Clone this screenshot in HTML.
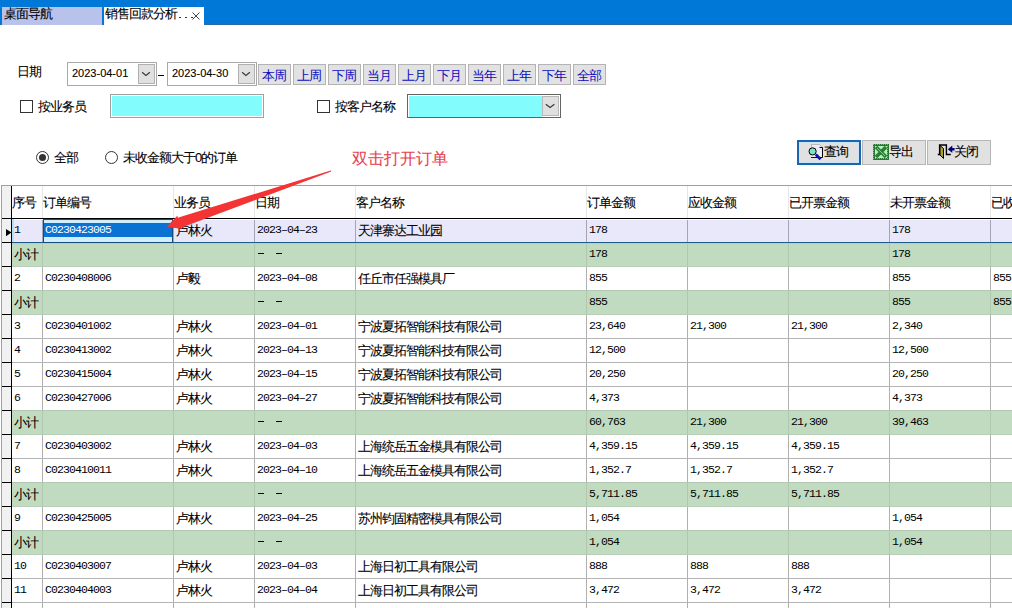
<!DOCTYPE html><html><head><meta charset="utf-8"><style>
*{margin:0;padding:0;box-sizing:border-box}
html,body{width:1012px;height:608px;overflow:hidden;background:#fff}
body{position:relative;font-family:"Liberation Sans",sans-serif;font-size:12px;color:#000}
.a{position:absolute}
.t{position:absolute;white-space:nowrap;line-height:13px;font-size:13px;letter-spacing:-1px;-webkit-text-stroke:0.1px currentColor}
.m{position:absolute;white-space:nowrap;font-family:"Liberation Mono",monospace;font-size:11.5px;letter-spacing:-0.9px;line-height:12px}
.btn{position:absolute;top:64px;width:33px;height:21px;background:#e2e2e2;border:1px solid #b4b4b4;color:#0a0ac0}
.btn span{position:absolute;left:3px;top:4px;line-height:13px;font-size:13px;letter-spacing:-1px;white-space:nowrap}
</style></head><body>
<div class="a" style="left:0;top:0;width:1012px;height:25px;background:#0078d7"></div>
<div class="a" style="left:0;top:24px;width:1012px;height:1px;background:#2a6aa8"></div>
<div class="a" style="left:2px;top:7px;width:100px;height:18px;background:#b8c2ea"></div>
<div class="t" style="left:4px;top:7px">桌面导航</div>
<div class="a" style="left:104px;top:7px;width:100px;height:18px;background:#fff"></div>
<div class="t" style="left:105px;top:7px">销售回款分析</div>
<div class="a" style="left:179px;top:17px;width:2px;height:1px;background:#333"></div>
<div class="a" style="left:185px;top:17px;width:2px;height:1px;background:#333"></div>
<div class="a" style="left:191px;top:17px;width:2px;height:1px;background:#333"></div>
<svg class="a" style="left:191px;top:11px" width="10" height="10"><path d="M1.5 1.5L8.5 8.5M8.5 1.5L1.5 8.5" stroke="#444" stroke-width="1"/></svg>
<div class="t" style="left:17px;top:65px">日期</div>
<div class="a" style="left:67px;top:62px;width:90px;height:24px;border:1px solid #a8a8a8;background:#fff"></div><div class="t" style="left:72px;top:67px;font-size:11px;line-height:12px;letter-spacing:0">2023-04-01</div><div class="a" style="left:138px;top:64px;width:17px;height:20px;background:#e0e0e0;border:1px solid #b0b0b0"></div><svg class="a" style="left:141px;top:70px" width="11" height="8"><path d="M1.1 2.2L4.9 5.5L8.9 2.2" stroke="#3a3a3a" stroke-width="1.2" fill="none"/></svg>
<div class="a" style="left:158px;top:75px;width:6px;height:1px;background:#000"></div>
<div class="a" style="left:167px;top:62px;width:90px;height:24px;border:1px solid #a8a8a8;background:#fff"></div><div class="t" style="left:172px;top:67px;font-size:11px;line-height:12px;letter-spacing:0">2023-04-30</div><div class="a" style="left:238px;top:64px;width:17px;height:20px;background:#e0e0e0;border:1px solid #b0b0b0"></div><svg class="a" style="left:241px;top:70px" width="11" height="8"><path d="M1.1 2.2L4.9 5.5L8.9 2.2" stroke="#3a3a3a" stroke-width="1.2" fill="none"/></svg>
<div class="btn" style="left:258px"><span>本周</span></div>
<div class="btn" style="left:293px"><span>上周</span></div>
<div class="btn" style="left:328px"><span>下周</span></div>
<div class="btn" style="left:363px"><span>当月</span></div>
<div class="btn" style="left:398px"><span>上月</span></div>
<div class="btn" style="left:433px"><span>下月</span></div>
<div class="btn" style="left:468px"><span>当年</span></div>
<div class="btn" style="left:503px"><span>上年</span></div>
<div class="btn" style="left:538px"><span>下年</span></div>
<div class="btn" style="left:573px"><span>全部</span></div>
<div class="a" style="left:20px;top:100px;width:13px;height:13px;border:1px solid #333;background:#fff"></div>
<div class="t" style="left:38px;top:100px">按业务员</div>
<div class="a" style="left:110px;top:94px;width:154px;height:24px;border:1px solid #a0a0a0;background:#82fcfc;box-shadow:inset 0 0 0 1px #fff"></div>
<div class="a" style="left:317px;top:100px;width:13px;height:13px;border:1px solid #333;background:#fff"></div>
<div class="t" style="left:335px;top:100px">按客户名称</div>
<div class="a" style="left:407px;top:94px;width:154px;height:24px;border:1px solid #646464;background:#fff"></div>
<div class="a" style="left:409px;top:96px;width:133px;height:21px;background:#82fcfc"></div>
<div class="a" style="left:542px;top:96px;width:17px;height:20px;background:#e0e0e0;border:1px solid #b8b8b8"></div>
<svg class="a" style="left:545px;top:102px" width="11" height="8"><path d="M0.8 2.2L5.1 5.5L9.4 2.2" stroke="#3a3a3a" stroke-width="1.2" fill="none"/></svg>
<svg class="a" style="left:36px;top:151px" width="13" height="13"><circle cx="6.5" cy="6.5" r="6" fill="#fff" stroke="#333" stroke-width="1"/><circle cx="6.5" cy="6.5" r="3.5" fill="#333"/></svg>
<div class="t" style="left:54px;top:151px">全部</div>
<svg class="a" style="left:105px;top:151px" width="13" height="13"><circle cx="6.5" cy="6.5" r="6" fill="#fff" stroke="#333" stroke-width="1"/></svg>
<div class="t" style="left:123px;top:151px">未收金额大于0的订单</div>
<div class="t" style="left:352px;top:151px;font-size:16px;line-height:16px;letter-spacing:0;color:#e8414f">双击打开订单</div>
<div class="a" style="left:797px;top:140px;width:64px;height:25px;border:2px solid #1a64b0;background:#e1e1e1;box-shadow:inset 0 0 0 1px #c8e4f8"></div>
<div class="t" style="left:824px;top:145px">查询</div>
<div class="a" style="left:862px;top:140px;width:64px;height:25px;border:1px solid #b6b6b6;background:#e1e1e1"></div>
<div class="t" style="left:889px;top:145px">导出</div>
<div class="a" style="left:927px;top:140px;width:64px;height:25px;border:1px solid #b6b6b6;background:#e1e1e1"></div>
<div class="t" style="left:954px;top:145px">关闭</div>
<div class="a" style="left:1px;top:185px;width:1011px;height:1px;background:#a0a0a0"></div>
<div class="a" style="left:1px;top:185px;width:1px;height:423px;background:#a0a0a0"></div>
<div class="a" style="left:2px;top:186px;width:9px;height:422px;background:#f1f1f1"></div>
<div class="a" style="left:11px;top:186px;width:1px;height:422px;background:#000"></div>
<div class="t" style="left:12px;top:196px">序号</div>
<div class="a" style="left:42px;top:186px;width:1px;height:32px;background:#e6e6e6"></div>
<div class="t" style="left:43px;top:196px">订单编号</div>
<div class="a" style="left:173px;top:186px;width:1px;height:32px;background:#e6e6e6"></div>
<div class="t" style="left:174px;top:196px">业务员</div>
<div class="a" style="left:254px;top:186px;width:1px;height:32px;background:#e6e6e6"></div>
<div class="t" style="left:255px;top:196px">日期</div>
<div class="a" style="left:355px;top:186px;width:1px;height:32px;background:#e6e6e6"></div>
<div class="t" style="left:356px;top:196px">客户名称</div>
<div class="a" style="left:586px;top:186px;width:1px;height:32px;background:#e6e6e6"></div>
<div class="t" style="left:587px;top:196px">订单金额</div>
<div class="a" style="left:687px;top:186px;width:1px;height:32px;background:#e6e6e6"></div>
<div class="t" style="left:688px;top:196px">应收金额</div>
<div class="a" style="left:788px;top:186px;width:1px;height:32px;background:#e6e6e6"></div>
<div class="t" style="left:789px;top:196px">已开票金额</div>
<div class="a" style="left:889px;top:186px;width:1px;height:32px;background:#e6e6e6"></div>
<div class="t" style="left:890px;top:196px">未开票金额</div>
<div class="a" style="left:990px;top:186px;width:1px;height:32px;background:#e6e6e6"></div>
<div class="t" style="left:991px;top:196px">已收款金额</div>
<div class="a" style="left:2px;top:218px;width:1010px;height:1px;background:#000"></div>
<div class="a" style="left:12px;top:219px;width:1000px;height:23px;background:#e8e8fa"></div>
<div class="a" style="left:12px;top:242px;width:1000px;height:1px;background:#b4b4b4"></div>
<div class="a" style="left:2px;top:242px;width:9px;height:1px;background:#000"></div>
<div class="m" style="left:14px;top:224px">1</div>
<div class="a" style="left:42px;top:219px;width:1px;height:23px;background:#a4a4b4"></div>
<div class="m" style="left:45px;top:224px">C0230423005</div>
<div class="a" style="left:173px;top:219px;width:1px;height:23px;background:#a4a4b4"></div>
<div class="t" style="left:176px;top:224px">卢林火</div>
<div class="a" style="left:254px;top:219px;width:1px;height:23px;background:#a4a4b4"></div>
<div class="m" style="left:257px;top:224px">2023&#8211;04&#8211;23</div>
<div class="a" style="left:355px;top:219px;width:1px;height:23px;background:#a4a4b4"></div>
<div class="t" style="left:358px;top:224px">天津寨达工业园</div>
<div class="a" style="left:586px;top:219px;width:1px;height:23px;background:#a4a4b4"></div>
<div class="m" style="left:589px;top:224px">178</div>
<div class="a" style="left:687px;top:219px;width:1px;height:23px;background:#a4a4b4"></div>
<div class="a" style="left:788px;top:219px;width:1px;height:23px;background:#a4a4b4"></div>
<div class="a" style="left:889px;top:219px;width:1px;height:23px;background:#a4a4b4"></div>
<div class="m" style="left:892px;top:224px">178</div>
<div class="a" style="left:990px;top:219px;width:1px;height:23px;background:#a4a4b4"></div>
<div class="a" style="left:12px;top:243px;width:1000px;height:23px;background:#c1dbc1"></div>
<div class="a" style="left:12px;top:266px;width:1000px;height:1px;background:#b6cdb6"></div>
<div class="a" style="left:2px;top:266px;width:9px;height:1px;background:#000"></div>
<div class="t" style="left:14px;top:248px">小计</div>
<div class="a" style="left:42px;top:243px;width:1px;height:23px;background:#b0c8b0"></div>
<div class="a" style="left:173px;top:243px;width:1px;height:23px;background:#b0c8b0"></div>
<div class="a" style="left:254px;top:243px;width:1px;height:23px;background:#b0c8b0"></div>
<div class="a" style="left:258px;top:253px;width:6px;height:1px;background:#000"></div>
<div class="a" style="left:276px;top:253px;width:6px;height:1px;background:#000"></div>
<div class="a" style="left:355px;top:243px;width:1px;height:23px;background:#b0c8b0"></div>
<div class="a" style="left:586px;top:243px;width:1px;height:23px;background:#b0c8b0"></div>
<div class="m" style="left:589px;top:248px">178</div>
<div class="a" style="left:687px;top:243px;width:1px;height:23px;background:#b0c8b0"></div>
<div class="a" style="left:788px;top:243px;width:1px;height:23px;background:#b0c8b0"></div>
<div class="a" style="left:889px;top:243px;width:1px;height:23px;background:#b0c8b0"></div>
<div class="m" style="left:892px;top:248px">178</div>
<div class="a" style="left:990px;top:243px;width:1px;height:23px;background:#b0c8b0"></div>
<div class="a" style="left:12px;top:267px;width:1000px;height:23px;background:#fff"></div>
<div class="a" style="left:12px;top:290px;width:1000px;height:1px;background:#b4b4b4"></div>
<div class="a" style="left:2px;top:290px;width:9px;height:1px;background:#000"></div>
<div class="m" style="left:14px;top:272px">2</div>
<div class="a" style="left:42px;top:267px;width:1px;height:23px;background:#b0b0b0"></div>
<div class="m" style="left:45px;top:272px">C0230408006</div>
<div class="a" style="left:173px;top:267px;width:1px;height:23px;background:#b0b0b0"></div>
<div class="t" style="left:176px;top:272px">卢毅</div>
<div class="a" style="left:254px;top:267px;width:1px;height:23px;background:#b0b0b0"></div>
<div class="m" style="left:257px;top:272px">2023&#8211;04&#8211;08</div>
<div class="a" style="left:355px;top:267px;width:1px;height:23px;background:#b0b0b0"></div>
<div class="t" style="left:358px;top:272px">任丘市任强模具厂</div>
<div class="a" style="left:586px;top:267px;width:1px;height:23px;background:#b0b0b0"></div>
<div class="m" style="left:589px;top:272px">855</div>
<div class="a" style="left:687px;top:267px;width:1px;height:23px;background:#b0b0b0"></div>
<div class="a" style="left:788px;top:267px;width:1px;height:23px;background:#b0b0b0"></div>
<div class="a" style="left:889px;top:267px;width:1px;height:23px;background:#b0b0b0"></div>
<div class="m" style="left:892px;top:272px">855</div>
<div class="a" style="left:990px;top:267px;width:1px;height:23px;background:#b0b0b0"></div>
<div class="m" style="left:993px;top:272px">855</div>
<div class="a" style="left:12px;top:291px;width:1000px;height:23px;background:#c1dbc1"></div>
<div class="a" style="left:12px;top:290px;width:1000px;height:1px;background:#b2c8b2"></div>
<div class="a" style="left:12px;top:314px;width:1000px;height:1px;background:#b6cdb6"></div>
<div class="a" style="left:2px;top:314px;width:9px;height:1px;background:#000"></div>
<div class="t" style="left:14px;top:296px">小计</div>
<div class="a" style="left:42px;top:291px;width:1px;height:23px;background:#b0c8b0"></div>
<div class="a" style="left:173px;top:291px;width:1px;height:23px;background:#b0c8b0"></div>
<div class="a" style="left:254px;top:291px;width:1px;height:23px;background:#b0c8b0"></div>
<div class="a" style="left:258px;top:301px;width:6px;height:1px;background:#000"></div>
<div class="a" style="left:276px;top:301px;width:6px;height:1px;background:#000"></div>
<div class="a" style="left:355px;top:291px;width:1px;height:23px;background:#b0c8b0"></div>
<div class="a" style="left:586px;top:291px;width:1px;height:23px;background:#b0c8b0"></div>
<div class="m" style="left:589px;top:296px">855</div>
<div class="a" style="left:687px;top:291px;width:1px;height:23px;background:#b0c8b0"></div>
<div class="a" style="left:788px;top:291px;width:1px;height:23px;background:#b0c8b0"></div>
<div class="a" style="left:889px;top:291px;width:1px;height:23px;background:#b0c8b0"></div>
<div class="m" style="left:892px;top:296px">855</div>
<div class="a" style="left:990px;top:291px;width:1px;height:23px;background:#b0c8b0"></div>
<div class="m" style="left:993px;top:296px">855</div>
<div class="a" style="left:12px;top:315px;width:1000px;height:23px;background:#fff"></div>
<div class="a" style="left:12px;top:338px;width:1000px;height:1px;background:#b4b4b4"></div>
<div class="a" style="left:2px;top:338px;width:9px;height:1px;background:#000"></div>
<div class="m" style="left:14px;top:320px">3</div>
<div class="a" style="left:42px;top:315px;width:1px;height:23px;background:#b0b0b0"></div>
<div class="m" style="left:45px;top:320px">C0230401002</div>
<div class="a" style="left:173px;top:315px;width:1px;height:23px;background:#b0b0b0"></div>
<div class="t" style="left:176px;top:320px">卢林火</div>
<div class="a" style="left:254px;top:315px;width:1px;height:23px;background:#b0b0b0"></div>
<div class="m" style="left:257px;top:320px">2023&#8211;04&#8211;01</div>
<div class="a" style="left:355px;top:315px;width:1px;height:23px;background:#b0b0b0"></div>
<div class="t" style="left:358px;top:320px">宁波夏拓智能科技有限公司</div>
<div class="a" style="left:586px;top:315px;width:1px;height:23px;background:#b0b0b0"></div>
<div class="m" style="left:589px;top:320px">23,640</div>
<div class="a" style="left:687px;top:315px;width:1px;height:23px;background:#b0b0b0"></div>
<div class="m" style="left:690px;top:320px">21,300</div>
<div class="a" style="left:788px;top:315px;width:1px;height:23px;background:#b0b0b0"></div>
<div class="m" style="left:791px;top:320px">21,300</div>
<div class="a" style="left:889px;top:315px;width:1px;height:23px;background:#b0b0b0"></div>
<div class="m" style="left:892px;top:320px">2,340</div>
<div class="a" style="left:990px;top:315px;width:1px;height:23px;background:#b0b0b0"></div>
<div class="a" style="left:12px;top:339px;width:1000px;height:23px;background:#fff"></div>
<div class="a" style="left:12px;top:362px;width:1000px;height:1px;background:#b4b4b4"></div>
<div class="a" style="left:2px;top:362px;width:9px;height:1px;background:#000"></div>
<div class="m" style="left:14px;top:344px">4</div>
<div class="a" style="left:42px;top:339px;width:1px;height:23px;background:#b0b0b0"></div>
<div class="m" style="left:45px;top:344px">C0230413002</div>
<div class="a" style="left:173px;top:339px;width:1px;height:23px;background:#b0b0b0"></div>
<div class="t" style="left:176px;top:344px">卢林火</div>
<div class="a" style="left:254px;top:339px;width:1px;height:23px;background:#b0b0b0"></div>
<div class="m" style="left:257px;top:344px">2023&#8211;04&#8211;13</div>
<div class="a" style="left:355px;top:339px;width:1px;height:23px;background:#b0b0b0"></div>
<div class="t" style="left:358px;top:344px">宁波夏拓智能科技有限公司</div>
<div class="a" style="left:586px;top:339px;width:1px;height:23px;background:#b0b0b0"></div>
<div class="m" style="left:589px;top:344px">12,500</div>
<div class="a" style="left:687px;top:339px;width:1px;height:23px;background:#b0b0b0"></div>
<div class="a" style="left:788px;top:339px;width:1px;height:23px;background:#b0b0b0"></div>
<div class="a" style="left:889px;top:339px;width:1px;height:23px;background:#b0b0b0"></div>
<div class="m" style="left:892px;top:344px">12,500</div>
<div class="a" style="left:990px;top:339px;width:1px;height:23px;background:#b0b0b0"></div>
<div class="a" style="left:12px;top:363px;width:1000px;height:23px;background:#fff"></div>
<div class="a" style="left:12px;top:386px;width:1000px;height:1px;background:#b4b4b4"></div>
<div class="a" style="left:2px;top:386px;width:9px;height:1px;background:#000"></div>
<div class="m" style="left:14px;top:368px">5</div>
<div class="a" style="left:42px;top:363px;width:1px;height:23px;background:#b0b0b0"></div>
<div class="m" style="left:45px;top:368px">C0230415004</div>
<div class="a" style="left:173px;top:363px;width:1px;height:23px;background:#b0b0b0"></div>
<div class="t" style="left:176px;top:368px">卢林火</div>
<div class="a" style="left:254px;top:363px;width:1px;height:23px;background:#b0b0b0"></div>
<div class="m" style="left:257px;top:368px">2023&#8211;04&#8211;15</div>
<div class="a" style="left:355px;top:363px;width:1px;height:23px;background:#b0b0b0"></div>
<div class="t" style="left:358px;top:368px">宁波夏拓智能科技有限公司</div>
<div class="a" style="left:586px;top:363px;width:1px;height:23px;background:#b0b0b0"></div>
<div class="m" style="left:589px;top:368px">20,250</div>
<div class="a" style="left:687px;top:363px;width:1px;height:23px;background:#b0b0b0"></div>
<div class="a" style="left:788px;top:363px;width:1px;height:23px;background:#b0b0b0"></div>
<div class="a" style="left:889px;top:363px;width:1px;height:23px;background:#b0b0b0"></div>
<div class="m" style="left:892px;top:368px">20,250</div>
<div class="a" style="left:990px;top:363px;width:1px;height:23px;background:#b0b0b0"></div>
<div class="a" style="left:12px;top:387px;width:1000px;height:23px;background:#fff"></div>
<div class="a" style="left:12px;top:410px;width:1000px;height:1px;background:#b4b4b4"></div>
<div class="a" style="left:2px;top:410px;width:9px;height:1px;background:#000"></div>
<div class="m" style="left:14px;top:392px">6</div>
<div class="a" style="left:42px;top:387px;width:1px;height:23px;background:#b0b0b0"></div>
<div class="m" style="left:45px;top:392px">C0230427006</div>
<div class="a" style="left:173px;top:387px;width:1px;height:23px;background:#b0b0b0"></div>
<div class="t" style="left:176px;top:392px">卢林火</div>
<div class="a" style="left:254px;top:387px;width:1px;height:23px;background:#b0b0b0"></div>
<div class="m" style="left:257px;top:392px">2023&#8211;04&#8211;27</div>
<div class="a" style="left:355px;top:387px;width:1px;height:23px;background:#b0b0b0"></div>
<div class="t" style="left:358px;top:392px">宁波夏拓智能科技有限公司</div>
<div class="a" style="left:586px;top:387px;width:1px;height:23px;background:#b0b0b0"></div>
<div class="m" style="left:589px;top:392px">4,373</div>
<div class="a" style="left:687px;top:387px;width:1px;height:23px;background:#b0b0b0"></div>
<div class="a" style="left:788px;top:387px;width:1px;height:23px;background:#b0b0b0"></div>
<div class="a" style="left:889px;top:387px;width:1px;height:23px;background:#b0b0b0"></div>
<div class="m" style="left:892px;top:392px">4,373</div>
<div class="a" style="left:990px;top:387px;width:1px;height:23px;background:#b0b0b0"></div>
<div class="a" style="left:12px;top:411px;width:1000px;height:23px;background:#c1dbc1"></div>
<div class="a" style="left:12px;top:410px;width:1000px;height:1px;background:#b2c8b2"></div>
<div class="a" style="left:12px;top:434px;width:1000px;height:1px;background:#b6cdb6"></div>
<div class="a" style="left:2px;top:434px;width:9px;height:1px;background:#000"></div>
<div class="t" style="left:14px;top:416px">小计</div>
<div class="a" style="left:42px;top:411px;width:1px;height:23px;background:#b0c8b0"></div>
<div class="a" style="left:173px;top:411px;width:1px;height:23px;background:#b0c8b0"></div>
<div class="a" style="left:254px;top:411px;width:1px;height:23px;background:#b0c8b0"></div>
<div class="a" style="left:258px;top:421px;width:6px;height:1px;background:#000"></div>
<div class="a" style="left:276px;top:421px;width:6px;height:1px;background:#000"></div>
<div class="a" style="left:355px;top:411px;width:1px;height:23px;background:#b0c8b0"></div>
<div class="a" style="left:586px;top:411px;width:1px;height:23px;background:#b0c8b0"></div>
<div class="m" style="left:589px;top:416px">60,763</div>
<div class="a" style="left:687px;top:411px;width:1px;height:23px;background:#b0c8b0"></div>
<div class="m" style="left:690px;top:416px">21,300</div>
<div class="a" style="left:788px;top:411px;width:1px;height:23px;background:#b0c8b0"></div>
<div class="m" style="left:791px;top:416px">21,300</div>
<div class="a" style="left:889px;top:411px;width:1px;height:23px;background:#b0c8b0"></div>
<div class="m" style="left:892px;top:416px">39,463</div>
<div class="a" style="left:990px;top:411px;width:1px;height:23px;background:#b0c8b0"></div>
<div class="a" style="left:12px;top:435px;width:1000px;height:23px;background:#fff"></div>
<div class="a" style="left:12px;top:458px;width:1000px;height:1px;background:#b4b4b4"></div>
<div class="a" style="left:2px;top:458px;width:9px;height:1px;background:#000"></div>
<div class="m" style="left:14px;top:440px">7</div>
<div class="a" style="left:42px;top:435px;width:1px;height:23px;background:#b0b0b0"></div>
<div class="m" style="left:45px;top:440px">C0230403002</div>
<div class="a" style="left:173px;top:435px;width:1px;height:23px;background:#b0b0b0"></div>
<div class="t" style="left:176px;top:440px">卢林火</div>
<div class="a" style="left:254px;top:435px;width:1px;height:23px;background:#b0b0b0"></div>
<div class="m" style="left:257px;top:440px">2023&#8211;04&#8211;03</div>
<div class="a" style="left:355px;top:435px;width:1px;height:23px;background:#b0b0b0"></div>
<div class="t" style="left:358px;top:440px">上海统岳五金模具有限公司</div>
<div class="a" style="left:586px;top:435px;width:1px;height:23px;background:#b0b0b0"></div>
<div class="m" style="left:589px;top:440px">4,359.15</div>
<div class="a" style="left:687px;top:435px;width:1px;height:23px;background:#b0b0b0"></div>
<div class="m" style="left:690px;top:440px">4,359.15</div>
<div class="a" style="left:788px;top:435px;width:1px;height:23px;background:#b0b0b0"></div>
<div class="m" style="left:791px;top:440px">4,359.15</div>
<div class="a" style="left:889px;top:435px;width:1px;height:23px;background:#b0b0b0"></div>
<div class="a" style="left:990px;top:435px;width:1px;height:23px;background:#b0b0b0"></div>
<div class="a" style="left:12px;top:459px;width:1000px;height:23px;background:#fff"></div>
<div class="a" style="left:12px;top:482px;width:1000px;height:1px;background:#b4b4b4"></div>
<div class="a" style="left:2px;top:482px;width:9px;height:1px;background:#000"></div>
<div class="m" style="left:14px;top:464px">8</div>
<div class="a" style="left:42px;top:459px;width:1px;height:23px;background:#b0b0b0"></div>
<div class="m" style="left:45px;top:464px">C0230410011</div>
<div class="a" style="left:173px;top:459px;width:1px;height:23px;background:#b0b0b0"></div>
<div class="t" style="left:176px;top:464px">卢林火</div>
<div class="a" style="left:254px;top:459px;width:1px;height:23px;background:#b0b0b0"></div>
<div class="m" style="left:257px;top:464px">2023&#8211;04&#8211;10</div>
<div class="a" style="left:355px;top:459px;width:1px;height:23px;background:#b0b0b0"></div>
<div class="t" style="left:358px;top:464px">上海统岳五金模具有限公司</div>
<div class="a" style="left:586px;top:459px;width:1px;height:23px;background:#b0b0b0"></div>
<div class="m" style="left:589px;top:464px">1,352.7</div>
<div class="a" style="left:687px;top:459px;width:1px;height:23px;background:#b0b0b0"></div>
<div class="m" style="left:690px;top:464px">1,352.7</div>
<div class="a" style="left:788px;top:459px;width:1px;height:23px;background:#b0b0b0"></div>
<div class="m" style="left:791px;top:464px">1,352.7</div>
<div class="a" style="left:889px;top:459px;width:1px;height:23px;background:#b0b0b0"></div>
<div class="a" style="left:990px;top:459px;width:1px;height:23px;background:#b0b0b0"></div>
<div class="a" style="left:12px;top:483px;width:1000px;height:23px;background:#c1dbc1"></div>
<div class="a" style="left:12px;top:482px;width:1000px;height:1px;background:#b2c8b2"></div>
<div class="a" style="left:12px;top:506px;width:1000px;height:1px;background:#b6cdb6"></div>
<div class="a" style="left:2px;top:506px;width:9px;height:1px;background:#000"></div>
<div class="t" style="left:14px;top:488px">小计</div>
<div class="a" style="left:42px;top:483px;width:1px;height:23px;background:#b0c8b0"></div>
<div class="a" style="left:173px;top:483px;width:1px;height:23px;background:#b0c8b0"></div>
<div class="a" style="left:254px;top:483px;width:1px;height:23px;background:#b0c8b0"></div>
<div class="a" style="left:258px;top:493px;width:6px;height:1px;background:#000"></div>
<div class="a" style="left:276px;top:493px;width:6px;height:1px;background:#000"></div>
<div class="a" style="left:355px;top:483px;width:1px;height:23px;background:#b0c8b0"></div>
<div class="a" style="left:586px;top:483px;width:1px;height:23px;background:#b0c8b0"></div>
<div class="m" style="left:589px;top:488px">5,711.85</div>
<div class="a" style="left:687px;top:483px;width:1px;height:23px;background:#b0c8b0"></div>
<div class="m" style="left:690px;top:488px">5,711.85</div>
<div class="a" style="left:788px;top:483px;width:1px;height:23px;background:#b0c8b0"></div>
<div class="m" style="left:791px;top:488px">5,711.85</div>
<div class="a" style="left:889px;top:483px;width:1px;height:23px;background:#b0c8b0"></div>
<div class="a" style="left:990px;top:483px;width:1px;height:23px;background:#b0c8b0"></div>
<div class="a" style="left:12px;top:507px;width:1000px;height:23px;background:#fff"></div>
<div class="a" style="left:12px;top:530px;width:1000px;height:1px;background:#b4b4b4"></div>
<div class="a" style="left:2px;top:530px;width:9px;height:1px;background:#000"></div>
<div class="m" style="left:14px;top:512px">9</div>
<div class="a" style="left:42px;top:507px;width:1px;height:23px;background:#b0b0b0"></div>
<div class="m" style="left:45px;top:512px">C0230425005</div>
<div class="a" style="left:173px;top:507px;width:1px;height:23px;background:#b0b0b0"></div>
<div class="t" style="left:176px;top:512px">卢林火</div>
<div class="a" style="left:254px;top:507px;width:1px;height:23px;background:#b0b0b0"></div>
<div class="m" style="left:257px;top:512px">2023&#8211;04&#8211;25</div>
<div class="a" style="left:355px;top:507px;width:1px;height:23px;background:#b0b0b0"></div>
<div class="t" style="left:358px;top:512px">苏州钧固精密模具有限公司</div>
<div class="a" style="left:586px;top:507px;width:1px;height:23px;background:#b0b0b0"></div>
<div class="m" style="left:589px;top:512px">1,054</div>
<div class="a" style="left:687px;top:507px;width:1px;height:23px;background:#b0b0b0"></div>
<div class="a" style="left:788px;top:507px;width:1px;height:23px;background:#b0b0b0"></div>
<div class="a" style="left:889px;top:507px;width:1px;height:23px;background:#b0b0b0"></div>
<div class="m" style="left:892px;top:512px">1,054</div>
<div class="a" style="left:990px;top:507px;width:1px;height:23px;background:#b0b0b0"></div>
<div class="a" style="left:12px;top:531px;width:1000px;height:23px;background:#c1dbc1"></div>
<div class="a" style="left:12px;top:530px;width:1000px;height:1px;background:#b2c8b2"></div>
<div class="a" style="left:12px;top:554px;width:1000px;height:1px;background:#b6cdb6"></div>
<div class="a" style="left:2px;top:554px;width:9px;height:1px;background:#000"></div>
<div class="t" style="left:14px;top:536px">小计</div>
<div class="a" style="left:42px;top:531px;width:1px;height:23px;background:#b0c8b0"></div>
<div class="a" style="left:173px;top:531px;width:1px;height:23px;background:#b0c8b0"></div>
<div class="a" style="left:254px;top:531px;width:1px;height:23px;background:#b0c8b0"></div>
<div class="a" style="left:258px;top:541px;width:6px;height:1px;background:#000"></div>
<div class="a" style="left:276px;top:541px;width:6px;height:1px;background:#000"></div>
<div class="a" style="left:355px;top:531px;width:1px;height:23px;background:#b0c8b0"></div>
<div class="a" style="left:586px;top:531px;width:1px;height:23px;background:#b0c8b0"></div>
<div class="m" style="left:589px;top:536px">1,054</div>
<div class="a" style="left:687px;top:531px;width:1px;height:23px;background:#b0c8b0"></div>
<div class="a" style="left:788px;top:531px;width:1px;height:23px;background:#b0c8b0"></div>
<div class="a" style="left:889px;top:531px;width:1px;height:23px;background:#b0c8b0"></div>
<div class="m" style="left:892px;top:536px">1,054</div>
<div class="a" style="left:990px;top:531px;width:1px;height:23px;background:#b0c8b0"></div>
<div class="a" style="left:12px;top:555px;width:1000px;height:23px;background:#fff"></div>
<div class="a" style="left:12px;top:578px;width:1000px;height:1px;background:#b4b4b4"></div>
<div class="a" style="left:2px;top:578px;width:9px;height:1px;background:#000"></div>
<div class="m" style="left:14px;top:560px">10</div>
<div class="a" style="left:42px;top:555px;width:1px;height:23px;background:#b0b0b0"></div>
<div class="m" style="left:45px;top:560px">C0230403007</div>
<div class="a" style="left:173px;top:555px;width:1px;height:23px;background:#b0b0b0"></div>
<div class="t" style="left:176px;top:560px">卢林火</div>
<div class="a" style="left:254px;top:555px;width:1px;height:23px;background:#b0b0b0"></div>
<div class="m" style="left:257px;top:560px">2023&#8211;04&#8211;03</div>
<div class="a" style="left:355px;top:555px;width:1px;height:23px;background:#b0b0b0"></div>
<div class="t" style="left:358px;top:560px">上海日初工具有限公司</div>
<div class="a" style="left:586px;top:555px;width:1px;height:23px;background:#b0b0b0"></div>
<div class="m" style="left:589px;top:560px">888</div>
<div class="a" style="left:687px;top:555px;width:1px;height:23px;background:#b0b0b0"></div>
<div class="m" style="left:690px;top:560px">888</div>
<div class="a" style="left:788px;top:555px;width:1px;height:23px;background:#b0b0b0"></div>
<div class="m" style="left:791px;top:560px">888</div>
<div class="a" style="left:889px;top:555px;width:1px;height:23px;background:#b0b0b0"></div>
<div class="a" style="left:990px;top:555px;width:1px;height:23px;background:#b0b0b0"></div>
<div class="a" style="left:12px;top:579px;width:1000px;height:23px;background:#fff"></div>
<div class="a" style="left:12px;top:602px;width:1000px;height:1px;background:#b4b4b4"></div>
<div class="a" style="left:2px;top:602px;width:9px;height:1px;background:#000"></div>
<div class="m" style="left:14px;top:584px">11</div>
<div class="a" style="left:42px;top:579px;width:1px;height:23px;background:#b0b0b0"></div>
<div class="m" style="left:45px;top:584px">C0230404003</div>
<div class="a" style="left:173px;top:579px;width:1px;height:23px;background:#b0b0b0"></div>
<div class="t" style="left:176px;top:584px">卢林火</div>
<div class="a" style="left:254px;top:579px;width:1px;height:23px;background:#b0b0b0"></div>
<div class="m" style="left:257px;top:584px">2023&#8211;04&#8211;04</div>
<div class="a" style="left:355px;top:579px;width:1px;height:23px;background:#b0b0b0"></div>
<div class="t" style="left:358px;top:584px">上海日初工具有限公司</div>
<div class="a" style="left:586px;top:579px;width:1px;height:23px;background:#b0b0b0"></div>
<div class="m" style="left:589px;top:584px">3,472</div>
<div class="a" style="left:687px;top:579px;width:1px;height:23px;background:#b0b0b0"></div>
<div class="m" style="left:690px;top:584px">3,472</div>
<div class="a" style="left:788px;top:579px;width:1px;height:23px;background:#b0b0b0"></div>
<div class="m" style="left:791px;top:584px">3,472</div>
<div class="a" style="left:889px;top:579px;width:1px;height:23px;background:#b0b0b0"></div>
<div class="a" style="left:990px;top:579px;width:1px;height:23px;background:#b0b0b0"></div>
<div class="a" style="left:12px;top:603px;width:1000px;height:23px;background:#fff"></div>
<div class="a" style="left:12px;top:626px;width:1000px;height:1px;background:#b4b4b4"></div>
<div class="a" style="left:2px;top:626px;width:9px;height:1px;background:#000"></div>
<div class="a" style="left:42px;top:603px;width:1px;height:23px;background:#b0b0b0"></div>
<div class="a" style="left:173px;top:603px;width:1px;height:23px;background:#b0b0b0"></div>
<div class="a" style="left:254px;top:603px;width:1px;height:23px;background:#b0b0b0"></div>
<div class="a" style="left:355px;top:603px;width:1px;height:23px;background:#b0b0b0"></div>
<div class="a" style="left:586px;top:603px;width:1px;height:23px;background:#b0b0b0"></div>
<div class="a" style="left:687px;top:603px;width:1px;height:23px;background:#b0b0b0"></div>
<div class="a" style="left:788px;top:603px;width:1px;height:23px;background:#b0b0b0"></div>
<div class="a" style="left:889px;top:603px;width:1px;height:23px;background:#b0b0b0"></div>
<div class="a" style="left:990px;top:603px;width:1px;height:23px;background:#b0b0b0"></div>
<div class="a" style="left:12px;top:219px;width:1000px;height:1px;background:#fff"></div>
<div class="a" style="left:12px;top:242px;width:1000px;height:1px;background:#1e5a8c"></div>
<div class="a" style="left:12px;top:243px;width:1000px;height:1px;background:#90d8ee"></div>
<div class="a" style="left:12px;top:219px;width:2px;height:23px;background:#b0e4f4"></div>
<div class="a" style="left:43px;top:219px;width:130px;height:24px;border:1px solid #1a4a7a;background:#d0eefc"></div>
<div class="a" style="left:44px;top:223px;width:128px;height:14px;background:#0a72d2"></div>
<div class="m" style="left:45px;top:224px;color:#fff">C0230423005</div>
<svg class="a" style="left:0;top:220px" width="12" height="20"><path d="M6 9L11.5 12.6L6 16.2Z" fill="#000"/></svg>
<svg class="a" style="left:0;top:0" width="1012" height="608"><path d="M330.8 170.5 L177.7 217.8 L177.5 215.6 L166.6 226.7 L182.1 229.1 L181.1 227.7 L331.2 171.6Z" fill="#f43434"/></svg>
<svg class="a" style="left:806px;top:141px" width="20" height="22" viewBox="806 141 20 22"><path d="M811.5 148V144.5H819.5L822.5 147.5" fill="none" stroke="#8a8a8a" stroke-width="1"/><path d="M811.5 144.5H819.5L822.5 147.5V157.5H811.5Z" fill="#ececf4"/><path d="M819.5 147.5H822.5V157.5H815.5" fill="none" stroke="#000" stroke-width="1"/><path d="M811 157.5H816" stroke="#111" stroke-width="1"/><path d="M815.8 154.5L820.5 159.3" stroke="#0a14a0" stroke-width="2.8"/><circle cx="812.6" cy="151.4" r="3.6" fill="#7ee0c4" stroke="#000" stroke-width="1"/></svg>
<svg class="a" style="left:873px;top:144px" width="16" height="16"><defs><pattern id="chk" width="2" height="2" patternUnits="userSpaceOnUse"><rect width="2" height="2" fill="#2a7434"/><rect width="1" height="1" fill="#6cc078"/></pattern></defs><rect x="0" y="0" width="16" height="16" fill="url(#chk)"/><rect x="2" y="2" width="12" height="12" fill="#b4f0b8"/><path d="M3 3L13 13M13 3L3 13" stroke="#2a7e36" stroke-width="3.6"/><path d="M4 4L12 12" stroke="#9ee0a4" stroke-width="0.8"/></svg>
<svg class="a" style="left:936px;top:141px" width="22" height="22" viewBox="936 141 22 22"><path d="M939.6 154.5V145H946.4V154.5H950.8M937.8 154.5H940" fill="none" stroke="#000" stroke-width="1.4"/><path d="M940 145.5L943.5 148.5V158.5L940 155Z" fill="#a4a428" stroke="#000" stroke-width="1"/><path d="M947.8 149.3L952.3 145.6V148H954.6V150.6H952.3V153Z" fill="#00007a"/></svg>
</body></html>
